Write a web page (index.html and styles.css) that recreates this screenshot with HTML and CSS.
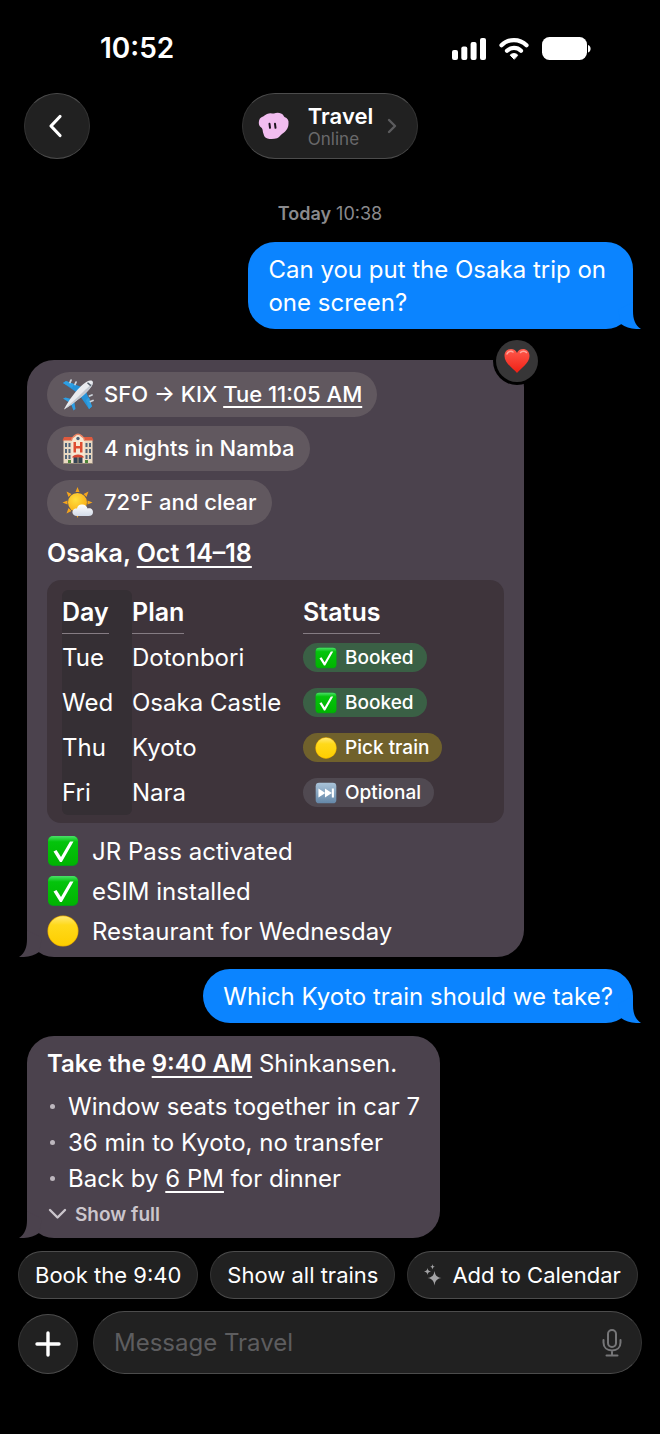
FILE: index.html
```html
<!DOCTYPE html>
<html lang="en">
<head>
    <meta charset="UTF-8">
    <meta name="viewport" content="width=device-width, initial-scale=1.0">
    <title>Travel</title>
    <link rel="stylesheet" href="styles.css">
</head>
<body>
    <!-- Shared shapes -->
    <svg class="sprite" aria-hidden="true">
        <defs>
            <linearGradient id="green" x1="0" y1="0" x2="0" y2="1">
                <stop offset="0" stop-color="#4be06a"/>
                <stop offset="0.2" stop-color="#04c40c"/>
                <stop offset="1" stop-color="#00b400"/>
            </linearGradient>
            <linearGradient id="yellow" x1="0" y1="0" x2="0" y2="1">
                <stop offset="0" stop-color="#ffe873"/>
                <stop offset="0.3" stop-color="#ffd91a"/>
                <stop offset="1" stop-color="#fdce00"/>
            </linearGradient>
            <linearGradient id="steel" x1="0" y1="0" x2="0" y2="1">
                <stop offset="0" stop-color="#a9c3d9"/>
                <stop offset="1" stop-color="#6487a8"/>
            </linearGradient>
            <linearGradient id="red" x1="0" y1="0" x2="0" y2="1">
                <stop offset="0" stop-color="#ff5a4c"/>
                <stop offset="1" stop-color="#f01f14"/>
            </linearGradient>
            <radialGradient id="sun" cx="0.4" cy="0.35" r="0.7">
                <stop offset="0" stop-color="#ffdf3f"/>
                <stop offset="1" stop-color="#f9ac14"/>
            </radialGradient>
            <linearGradient id="cloud" x1="0" y1="0" x2="0" y2="1">
                <stop offset="0" stop-color="#ffffff"/>
                <stop offset="1" stop-color="#d3dbe8"/>
            </linearGradient>
        </defs>
        <symbol id="tail" viewBox="0 0 41 27">
            <path d="M33 0V9C33 17 35 23 41 27C33 27.5 26 25.5 21 22L18 8Z"/>
        </symbol>
        <symbol id="check" viewBox="0 0 32 32">
            <rect x="1" y="1" width="30" height="30" rx="5" fill="#079a1a"/>
            <rect x="1" y="1" width="30" height="29" rx="5" fill="url(#green)"/>
            <path d="M6.5 16.5 9.5 15 14 22 23 6.5H26.5L14.8 27H13Z" fill="#fff"/>
        </symbol>
        <symbol id="dot" viewBox="0 0 32 32">
            <circle cx="16" cy="16" r="15.5" fill="#e5a900"/>
            <circle cx="16" cy="16" r="14.8" fill="url(#yellow)"/>
        </symbol>
        <symbol id="skip" viewBox="0 0 32 32">
            <rect x="1" y="1" width="30" height="30" rx="5" fill="url(#steel)"/>
            <path d="M5 9.5 15 16 5 22.5ZM14.5 9.5 24.5 16 14.5 22.5ZM24.5 9.5H27.5V22.5H24.5Z" fill="#fff"/>
        </symbol>
    </svg>

    <div class="status-bar">
        <span class="clock">10:52</span>
        <div class="status-icons">
            <svg width="34" height="24" viewBox="0 0 34 24" fill="#fff">
                <rect x="0" y="13" width="6" height="10" rx="2"/>
                <rect x="9.3" y="9.5" width="6" height="13.5" rx="2"/>
                <rect x="18.6" y="5" width="6" height="18" rx="2"/>
                <rect x="28" y="1" width="6" height="22" rx="2"/>
            </svg>
            <svg width="30" height="24" viewBox="0 0 30 24" fill="none" stroke="#fff" stroke-width="4.2" stroke-linecap="round">
                <path d="M2.5 8.2A17.7 17.7 0 0 1 27.5 8.2"/>
                <path d="M8 13.7A10 10 0 0 1 22 13.7"/>
                <path d="M15 22 11.3 18.3C11 17.8 12.9 16.6 15 16.6S19 17.8 18.7 18.3Z" fill="#fff" stroke-width="1"/>
            </svg>
            <svg width="49" height="24" viewBox="0 0 49 24" fill="#fff">
                <rect width="45" height="23" rx="7.5"/>
                <path d="M46 8C49.5 9 49.5 14.5 46 15.5Z"/>
            </svg>
        </div>
    </div>

    <header class="header">
        <button class="glass back" type="button" aria-label="Back">
            <svg width="16" height="24" viewBox="0 0 16 24" fill="none" stroke="#fff" stroke-width="3.2" stroke-linecap="round" stroke-linejoin="round">
                <path d="M13 2.5 4 12 13 21.5"/>
            </svg>
        </button>
        <button class="glass contact" type="button">
            <svg width="32" height="30" viewBox="0 -1 32 30">
                <path d="M9 2C12 .5 14 1.500 16 1.500C18 .5 21 .3 23 1.500C25.500 2.500 25.500 4 26.500 5C29.500 6 31 8.500 30.500 11.500C30.500 16 28 19.500 24 22C22 23.500 21 25.500 19 26.300C16 27.200 12 27.300 9.500 26.500C6 25.500 6 23 5.200 21C4.500 19 5 17.500 3.800 16C2 15 .8 13 .8 11C.8 7.500 2 5.500 5 4.500C6.500 4 7 2.800 9 2Z" fill="#f2bdf0"/>
                <path d="M11.500 11.800 12 15.800M17 11.800 17.500 15.800" stroke="#1d1420" stroke-width="2" stroke-linecap="round"/>
            </svg>
            <span class="contact-text">
                <span class="contact-name">Travel</span>
                <span class="contact-state">Online</span>
            </span>
            <svg width="10" height="16" viewBox="0 0 10 16" fill="none" stroke="#5c5c5e" stroke-width="2.4" stroke-linecap="round" stroke-linejoin="round">
                <path d="M2 2 8 8 2 14"/>
            </svg>
        </button>
    </header>

    <main class="chat">
        <p class="timestamp"><strong>Today</strong> 10:38</p>

        <div class="bubble sent question">
            <svg class="tail" width="41" height="27"><use href="#tail"/></svg>
            Can you put the Osaka trip on<br>one screen?
        </div>

        <div class="bubble received trip">
            <svg class="tail" width="41" height="27"><use href="#tail"/></svg>
            <span class="reaction">
                <svg width="28" height="26" viewBox="0 0 28 26">
                    <path d="M14 25C11 21 1.500 15.500 1.500 8C1.500 3.500 4.500 1 8 1C10.800 1 13 2.500 14 5C15 2.500 17.200 1 20 1C23.500 1 26.500 3.500 26.500 8C26.500 15.500 17 21 14 25Z" fill="url(#red)"/>
                    <path d="M4 6C5 3.500 8 2.500 10 4M17.500 4.500C19 2.700 22 2.700 23.500 4.500" fill="none" stroke="#ffa69c" stroke-width="1.5" stroke-linecap="round"/>
                </svg>
            </span>

            <ul class="facts">
                <li>
                    <svg width="32" height="32" viewBox="0 0 32 32">
                        <path d="M1 4 4 2 22 9 17 15ZM23 10 17 15.500 27 30 30 27.500Z" fill="#2592d8"/>
                        <path d="M1 4 4 2 12 5 10 9ZM24 21 27 30 30 27.500 27 18Z" fill="#2f9fe2"/>
                        <path d="M1 19.500 3.500 18.500 11 20.500 8 24ZM12 21 8.500 24 11.500 31.500 13.500 30Z" fill="#2d9ee4"/>
                        <path d="M8 3.500 9 1.200M13 5.500 14 3.200M27.500 17 30 16M28.500 22.500 31 21.500" stroke="#cdd3da" stroke-width="1.8" stroke-linecap="round"/>
                        <path d="M2 30.500C4 26 9 18.500 13.500 13C18 7.500 24.500 1.500 28.500 1.500C31.500 1.500 31.500 4 30 6.500C27.500 11 23 15 18 19C13 23 7 27.500 2 30.500Z" fill="#e9ebef"/>
                        <path d="M2 30.500C8 25 15 19 20 14C25 9 29 6 31 3.500C31 7 25 13.500 18 19C13 23 7 27.500 2 30.500Z" fill="#c3c8d0"/>
                        <path d="M25.500 3.800 28.800 6.600" stroke="#505a66" stroke-width="1.5"/>
                    </svg>
                    <span>SFO → KIX <a href="#flight">Tue 11:05 AM</a></span>
                </li>
                <li>
                    <svg width="32" height="32" viewBox="0 0 32 32">
                        <path d="M1.500 7H30.500V30H1.500Z" fill="#ead9c2"/>
                        <path d="M9.500 30V7C9.500 4 12 3.500 13 2.500C14.500.8 17.500.8 19 2.500C20 3.500 22.500 4 22.500 7V30Z" fill="#f7e8d3"/>
                        <path d="M.5 7.500 2 4H10V7.500ZM22 7.500V4H30L31.500 7.500Z" fill="#de5a3e"/>
                        <path d="M9.500 7.500C9.500 3.500 12 4 13 2.500C14.500.8 17.500.8 19 2.500C20 4 22.500 3.500 22.500 7.500" fill="none" stroke="#e98362" stroke-width="1.5"/>
                        <circle cx="16" cy="5.5" r="1.7" fill="#496078"/>
                        <path d="M3 10H5V14H3ZM6.500 10H8.500V14H6.500ZM23.500 10H25.500V14H23.500ZM27 10H29V14H27ZM3 16H5V20H3ZM6.500 16H8.500V20H6.500ZM23.500 16H25.500V20H23.500ZM27 16H29V20H27ZM3 22H5V26H3ZM6.500 22H8.500V26H6.500ZM23.500 22H25.500V26H23.500ZM27 22H29V26H27Z" fill="#51647a"/>
                        <path d="M11.500 9H14V13H18V9H20.500V19.500H18V15.500H14V19.500H11.500Z" fill="#df4d32"/>
                        <path d="M11.500 23H20.500V30H11.500Z" fill="#344454"/>
                        <path d="M10 24.500C11 20.500 21 20.500 22 24.500Z" fill="#d84731"/>
                        <path d="M16 24V30" stroke="#b29a78"/>
                        <path d="M1 30.500H31" stroke="#908477"/>
                        <path d="M6 30V27H9V30ZM23 30V27H26V30Z" fill="#4c8538"/>
                    </svg>
                    <span>4 nights in Namba</span>
                </li>
                <li>
                    <svg width="32" height="32" viewBox="0 0 32 32">
                        <path d="M15.500 0 17.500 5H13.500ZM4.500 4.500 9.500 7 6.500 10ZM26.500 4.500 24.500 10 21.500 7ZM.5 15.500 5.500 13.500V17.500ZM30.500 15.500 25.500 13.500V17.500ZM4.500 26.500 6.500 21 9.500 24ZM15.500 31 13.500 26H17.500Z" fill="#f5a51b"/>
                        <circle cx="15.5" cy="15.5" r="9.5" fill="url(#sun)"/>
                        <path d="M15 29C11.500 29 10 26.500 10.500 24.500C11 22 13 21 15 21.500C15.500 18.500 18 17 20.500 17.500C23 17.500 25 19.500 25.500 21.500C28.500 20.500 31 22 31 25C31 27.500 29.500 29 26.500 29Z" fill="url(#cloud)"/>
                    </svg>
                    <span>72°F and clear</span>
                </li>
            </ul>

            <h2 class="trip-title">Osaka, <a href="#dates">Oct 14–18</a></h2>

            <div class="plan">
                <table>
                    <thead>
                        <tr>
                            <th scope="col"><span>Day</span></th>
                            <th scope="col"><span>Plan</span></th>
                            <th scope="col"><span>Status</span></th>
                        </tr>
                    </thead>
                    <tbody>
                        <tr>
                            <td>Tue</td>
                            <td>Dotonbori</td>
                            <td><span class="tag booked"><svg width="22" height="22"><use href="#check"/></svg>Booked</span></td>
                        </tr>
                        <tr>
                            <td>Wed</td>
                            <td>Osaka Castle</td>
                            <td><span class="tag booked"><svg width="22" height="22"><use href="#check"/></svg>Booked</span></td>
                        </tr>
                        <tr>
                            <td>Thu</td>
                            <td>Kyoto</td>
                            <td><span class="tag pick"><svg width="22" height="22"><use href="#dot"/></svg>Pick train</span></td>
                        </tr>
                        <tr>
                            <td>Fri</td>
                            <td>Nara</td>
                            <td><span class="tag optional"><svg width="22" height="22"><use href="#skip"/></svg>Optional</span></td>
                        </tr>
                    </tbody>
                </table>
            </div>

            <ul class="checklist">
                <li><svg width="32" height="32"><use href="#check"/></svg>JR Pass activated</li>
                <li><svg width="32" height="32"><use href="#check"/></svg>eSIM installed</li>
                <li><svg width="32" height="32"><use href="#dot"/></svg>Restaurant for Wednesday</li>
            </ul>
        </div>

        <div class="bubble sent">
            <svg class="tail" width="41" height="27"><use href="#tail"/></svg>
            Which Kyoto train should we take?
        </div>

        <div class="bubble received answer">
            <svg class="tail" width="41" height="27"><use href="#tail"/></svg>
            <p><strong>Take the <a href="#train">9:40 AM</a></strong> Shinkansen.</p>
            <ul class="bullets">
                <li>Window seats together in car 7</li>
                <li>36 min to Kyoto, no transfer</li>
                <li>Back by <a href="#return">6 PM</a> for dinner</li>
            </ul>
            <button class="show-full" type="button">
                <svg width="20" height="12" viewBox="0 0 20 12" fill="none" stroke="#cbc6cc" stroke-width="2.4" stroke-linecap="round" stroke-linejoin="round">
                    <path d="M3 2 10.500 9.500 18 2"/>
                </svg>
                Show full
            </button>
        </div>
    </main>

    <footer class="footer">
        <div class="suggestions">
            <button class="glass" type="button">Book the 9:40</button>
            <button class="glass" type="button">Show all trains</button>
            <button class="glass" type="button">
                <svg width="18" height="22" viewBox="0 0 18 22" fill="#a3a3a5">
                    <path d="M10.500 7C11.300 11.500 12.800 13.200 17.500 14C12.800 14.800 11.300 16.500 10.500 21.500C9.700 16.500 8.200 14.800 3.500 14C8.200 13.200 9.700 11.500 10.500 7Z"/>
                    <path d="M3.500 4C3.900 6.300 4.700 7.100 7 7.500C4.700 7.900 3.900 8.700 3.500 11C3.100 8.700 2.300 7.900 0 7.500C2.300 7.100 3.100 6.300 3.500 4ZM8.500 0C8.800 1.800 9.300 2.400 11 2.700C9.300 3 8.800 3.700 8.500 5.500C8.200 3.700 7.700 3 6 2.700C7.700 2.400 8.200 1.800 8.500 0Z"/>
                </svg>
                Add to Calendar
            </button>
        </div>
        <form class="composer">
            <button class="glass add" type="button" aria-label="Add attachment">
                <svg width="26" height="26" viewBox="0 0 26 26" stroke="#fff" stroke-width="3.4" stroke-linecap="round">
                    <path d="M13 2V24M2 13H24"/>
                </svg>
            </button>
            <div class="glass field">
                <input type="text" aria-label="Message Travel" placeholder="Message Travel">
                <button class="mic" type="button" aria-label="Dictate">
                    <svg width="20" height="28" viewBox="0 0 20 28" fill="none" stroke="#767678" stroke-width="2" stroke-linecap="round">
                        <rect x="6" y="1" width="8" height="17" rx="4"/>
                        <path d="M1.500 11V13.500C1.500 18.500 5 21.500 10 21.500S18.500 18.500 18.500 13.500V11M10 21.500V26.500M4.500 26.500H15.500"/>
                    </svg>
                </button>
            </div>
        </form>
    </footer>
</body>
</html>
```

FILE: styles.css
```css
* {
    box-sizing: border-box;
}
body {
    font-family: Inter, 'Liberation Sans', sans-serif;
    font-size: 24px;
    line-height: 33px;
    background-color: #000;
    color: #fff;
    margin: 0;
}
p, h2, ul {
    margin: 0;
    padding: 0;
}
ul {
    list-style: none;
}
a {
    color: inherit;
    text-decoration: underline;
    text-decoration-thickness: 2px;
    text-underline-offset: 4px;
}
button, input {
    font: inherit;
    color: inherit;
    border: none;
    background: none;
    margin: 0;
    padding: 0;
}
button {
    cursor: pointer;
}
svg {
    flex: none;
}
strong {
    font-weight: 600;
}
.sprite {
    position: absolute;
    width: 0;
    height: 0;
}
.glass {
    background-color: #212121;
    border: 1px solid #343434;
    border-top-color: #4c4c4c;
    border-bottom-color: #4c4c4c;
    border-radius: 33px;
    display: flex;
    align-items: center;
    justify-content: center;
}

/* Top of the screen */
.status-bar {
    display: flex;
    align-items: center;
    justify-content: space-between;
    padding: 32px 69px 28px 100px;
}
.clock {
    font-size: 28px;
    font-weight: 600;
}
.status-icons {
    display: flex;
    align-items: center;
    gap: 13px;
}
.header {
    display: grid;
    grid-template-columns: 1fr auto 1fr;
    padding: 0 24px;
}
.back {
    width: 66px;
    height: 66px;
    padding-right: 4px;
}
.contact {
    gap: 14px;
    padding: 0 20px 0 15px;
}
.contact-text {
    display: flex;
    flex-direction: column;
    text-align: left;
    padding: 2px 0 0 4px;
}
.contact-name {
    font-size: 22px;
    font-weight: 600;
    line-height: 24px;
}
.contact-state {
    font-size: 17px;
    line-height: 22px;
    color: #69696b;
}

/* Messages */
.chat {
    display: flex;
    flex-direction: column;
    padding: 0 27px;
}
.timestamp {
    font-size: 18px;
    line-height: 24px;
    color: #8a8a8d;
    text-align: center;
    margin: 43px 0 16px;
}
.bubble {
    position: relative;
    border-radius: 27px;
    padding: 11px 20px 10px;
}
.sent {
    align-self: flex-end;
    background-color: #0b84ff;
    fill: #0b84ff;
}
.question {
    padding-right: 27px;
}
.received {
    align-self: flex-start;
    background-color: #4b424d;
    fill: #4b424d;
}
.tail {
    position: absolute;
    right: -8px;
    bottom: 0;
}
.received .tail {
    right: auto;
    left: -8px;
    transform: scaleX(-1);
}
.trip {
    width: 82%;
    margin: 31px 0 12px;
    padding: 12px 20px 6px;
}
.reaction {
    position: absolute;
    top: -20px;
    right: -14px;
    width: 42px;
    height: 42px;
    border-radius: 50%;
    background-color: #373637;
    box-shadow: 0 0 0 3px #000;
    display: flex;
    align-items: center;
    justify-content: center;
}
.facts {
    display: flex;
    flex-direction: column;
    align-items: flex-start;
    gap: 9px;
}
.facts li {
    display: flex;
    align-items: center;
    gap: 10px;
    height: 45px;
    padding: 0 15px;
    border-radius: 23px;
    background-color: #61585f;
    font-size: 22px;
    font-weight: 500;
}
.trip-title {
    font-size: 25px;
    font-weight: 600;
    margin: 12px 0 10px;
}
.plan {
    background-color: #3e343b;
    border-radius: 14px;
    padding: 10px 15px 8px;
}
.plan table {
    width: 100%;
    border-collapse: collapse;
}
.plan th, .plan td {
    height: 45px;
    padding: 0;
    text-align: left;
    vertical-align: middle;
}
.plan th {
    font-size: 25px;
    font-weight: 600;
}
.plan th span {
    display: inline-block;
    height: 43px;
    line-height: 43px;
    border-bottom: 1px solid #857c83;
}
.plan th:first-child {
    width: 70px;
    border-radius: 6px 6px 0 0;
}
.plan th:nth-child(2) {
    width: 171px;
}
.plan th:first-child, .plan td:first-child {
    background-color: #352f34;
}
.plan tr:last-child td:first-child {
    border-radius: 0 0 6px 6px;
}
.tag {
    display: flex;
    align-items: center;
    gap: 8px;
    width: fit-content;
    height: 29px;
    padding: 0 13px 0 12px;
    border-radius: 15px;
    font-size: 19px;
    font-weight: 500;
}
.booked {
    background-color: #3a6045;
}
.pick {
    background-color: #70612c;
}
.optional {
    background-color: #504951;
}
.checklist {
    margin-top: 8px;
}
.checklist li {
    display: flex;
    align-items: center;
    gap: 13px;
    height: 40px;
}
.answer {
    margin-top: 13px;
    padding-bottom: 6px;
}
.bullets {
    margin-top: 8px;
}
.bullets li {
    display: flex;
    align-items: center;
    white-space: pre;
    height: 36px;
}
.bullets li::before {
    content: "";
    width: 5px;
    height: 5px;
    margin: 0 13px 0 3px;
    border-radius: 50%;
    background-color: #bdb7be;
}
.show-full {
    display: flex;
    align-items: center;
    gap: 8px;
    height: 36px;
    font-size: 19px;
    font-weight: 600;
    color: #cbc6cc;
}

/* Replies and message box */
.footer {
    padding: 13px 18px 60px;
}
.suggestions {
    display: flex;
    gap: 12px;
    margin-bottom: 12px;
}
.suggestions button {
    gap: 10px;
    height: 48px;
    padding: 0 16px;
    font-size: 22px;
    white-space: nowrap;
}
.composer {
    display: flex;
    align-items: flex-end;
    gap: 15px;
}
.add {
    width: 60px;
    height: 60px;
}
.field {
    flex: 1;
    height: 63px;
    padding: 0 19px 0 20px;
}
.field input {
    flex: 1;
    min-width: 0;
    outline: none;
}
.field input::placeholder {
    color: #5d5d5f;
    opacity: 1;
}
.mic {
    display: flex;
}
```
